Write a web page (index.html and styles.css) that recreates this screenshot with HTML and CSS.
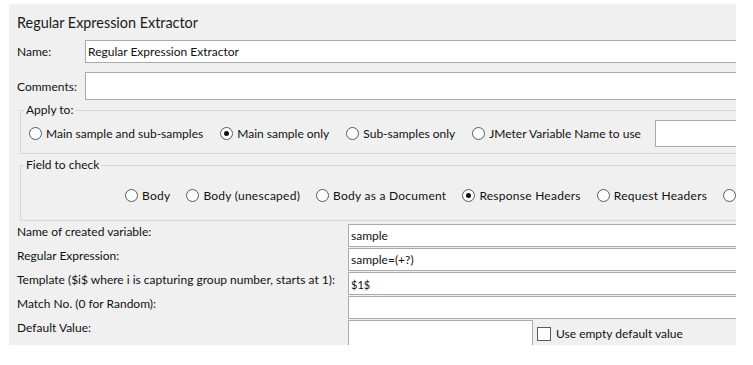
FILE: index.html
```html
<!DOCTYPE html>
<html>
<head>
<meta charset="utf-8">
<link rel="stylesheet" href="styles.css">
</head>
<body>
<div class="panel">
  <div class="title">Regular Expression Extractor</div>
  <div class="row name-row">
    <span class="lbl">Name:</span>
    <div class="input wide">Regular Expression Extractor</div>
  </div>
  <div class="row comments-row">
    <span class="lbl">Comments:</span>
    <div class="input wide tall"></div>
  </div>
  <fieldset class="group apply">
    <legend>Apply to:</legend>
    <div class="radios apply-radios">
      <span class="opt"><span class="radio"></span>Main sample and sub-samples</span>
      <span class="opt"><span class="radio on"></span>Main sample only</span>
      <span class="opt"><span class="radio"></span>Sub-samples only</span>
      <span class="opt"><span class="radio"></span>JMeter Variable Name to use</span>
      <div class="input var"></div>
    </div>
  </fieldset>
  <fieldset class="group field">
    <legend>Field to check</legend>
    <div class="radios field-radios">
      <span class="opt"><span class="radio"></span>Body</span>
      <span class="opt"><span class="radio"></span>Body (unescaped)</span>
      <span class="opt"><span class="radio"></span>Body as a Document</span>
      <span class="opt"><span class="radio on"></span>Response Headers</span>
      <span class="opt"><span class="radio"></span>Request Headers</span>
      <span class="opt"><span class="radio"></span></span>
    </div>
  </fieldset>
  <div class="form">
    <span class="flbl">Name of created variable:</span>
    <div class="input cell">sample</div>
    <span class="flbl">Regular Expression:</span>
    <div class="input cell">sample=(+?)</div>
    <span class="flbl">Template ($i$ where i is capturing group number, starts at 1):</span>
    <div class="input cell small">$1$</div>
    <span class="flbl">Match No. (0 for Random):</span>
    <div class="input cell"></div>
    <span class="flbl">Default Value:</span>
    <div class="default-row">
      <div class="input cell short"></div>
      <span class="check-opt"><span class="checkbox"></span>Use empty default value</span>
    </div>
  </div>
</div>
</body>
</html>
```

FILE: styles.css
```css
html, body {
  margin: 0;
  padding: 0;
  background: #ffffff;
}
body {
  font-family: Lato, "Noto Sans", sans-serif;
  font-size: 12px;
  color: #111;
}
.panel {
  margin: 4px 0 0 9px;
  width: 727px;
  height: 341px;
  background: #f0f0f0;
  overflow: hidden;
  display: flex;
  flex-direction: column;
}
.title {
  height: 32px;
  line-height: 37px;
  padding-left: 8px;
  font-size: 14.4px;
  color: #1a1a1a;
  flex: none;
}
.row {
  display: flex;
  align-items: center;
  flex: none;
  white-space: nowrap;
}
.name-row { margin-top: 4px; }
.comments-row { margin-top: 9px; }
.lbl {
  width: 68px;
  padding-left: 8px;
  flex: none;
}
.input {
  background: #fff;
  border: 1px solid #a9a9a9;
  box-sizing: border-box;
  flex: none;
  white-space: nowrap;
}
.wide {
  width: 700px;
  height: 23px;
  line-height: 21px;
  padding-left: 2px;
}
.tall { height: 28px; }
.group {
  margin: 0;
  border: 1px solid #d6d6d6;
  flex: none;
  width: 760px;
  box-sizing: border-box;
}
.group legend {
  padding: 0 2px;
  margin-left: 3px;
  line-height: 16px;
}
.apply {
  margin: 2px 0 0 11px;
  padding: 2px 0 6px 0;
}
.apply-radios {
  padding-left: 8px;
  gap: 17px;
}
.field {
  margin: 3px 0 0 11px;
  padding: 13px 0 16px 0;
}
.field-radios {
  padding-left: 104px;
  letter-spacing: 0.25px;
  gap: 16px;
}
.radios {
  display: flex;
  align-items: center;
  white-space: nowrap;
}
.opt {
  display: inline-flex;
  align-items: center;
  gap: 4px;
  height: 18px;
}
.radio {
  width: 13px;
  height: 13px;
  box-sizing: border-box;
  border: 1px solid #5a5a5a;
  border-radius: 50%;
  background: #fff;
  display: inline-flex;
  align-items: center;
  justify-content: center;
  flex: none;
}
.radio.on::after {
  content: "";
  width: 5px;
  height: 5px;
  border-radius: 50%;
  background: #111;
}
.var {
  width: 120px;
  height: 27px;
  margin-left: -3px;
}
.form {
  margin-top: 3px;
  display: grid;
  grid-template-columns: 339px 400px;
  grid-auto-rows: 24px;
  white-space: nowrap;
  flex: none;
}
.flbl {
  padding-left: 8px;
  line-height: 16px;
}
.cell {
  height: 23px;
  line-height: 21px;
  padding-left: 2px;
  width: 400px;
}
.small {
  font-size: 11px;
  line-height: 23px;
}
.default-row {
  display: flex;
  align-items: flex-start;
  gap: 4px;
}
.short { width: 185px; height: 30px; }
.check-opt {
  display: inline-flex;
  align-items: center;
  gap: 5px;
  margin-top: 6px;
}
.checkbox {
  width: 14px;
  height: 14px;
  box-sizing: border-box;
  border: 1px solid #5a5a5a;
  background: #fff;
  flex: none;
}
```
